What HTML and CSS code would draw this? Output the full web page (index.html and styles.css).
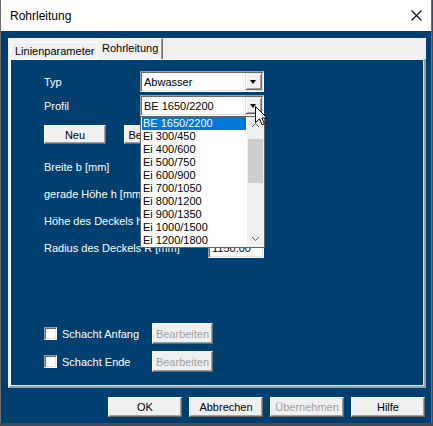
FILE: index.html
```html
<!DOCTYPE html>
<html lang="de">
<head>
<meta charset="utf-8">
<title>Rohrleitung</title>
<link rel="stylesheet" href="styles.css">
</head>
<body>
<div class="window">
  <div class="titlebar">
    <span class="title">Rohrleitung</span>
    <svg class="close" width="11" height="11" viewBox="0 0 11 11"><path d="M0.5 0.5L10.5 10.5M10.5 0.5L0.5 10.5" stroke="#000" stroke-width="1.1" fill="none"/></svg>
  </div>
  <div class="client">
    <div class="tabctl">
      <div class="tabstrip">
        <div class="tab">Linienparameter</div>
        <div class="tab active">Rohrleitung</div>
      </div>
      <div class="page">
        <div class="form-grid">
          <span class="label">Typ</span>
          <div class="combo"><span class="combo-text">Abwasser</span><span class="drop"><span class="tri"></span></span></div>
          <span class="label">Profil</span>
          <div class="combo open"><span class="combo-text">BE 1650/2200</span><span class="drop"><span class="tri"></span></span>
            <div class="listbox">
              <div class="items">
                <div class="item sel">BE 1650/2200</div>
                <div class="item">Ei 300/450</div>
                <div class="item">Ei 400/600</div>
                <div class="item">Ei 500/750</div>
                <div class="item">Ei 600/900</div>
                <div class="item">Ei 700/1050</div>
                <div class="item">Ei 800/1200</div>
                <div class="item">Ei 900/1350</div>
                <div class="item">Ei 1000/1500</div>
                <div class="item">Ei 1200/1800</div>
              </div>
              <div class="vscroll">
                <svg class="chev" width="17" height="17" viewBox="0 0 17 17"><path d="M5 10L8.5 6.5L12 10" stroke="#606060" stroke-width="1" fill="none"/></svg>
                <div class="thumb"></div>
                <svg class="chev down" width="17" height="17" viewBox="0 0 17 17"><path d="M5 7L8.5 10.5L12 7" stroke="#606060" stroke-width="1" fill="none"/></svg>
              </div>
            </div>
          </div>
        </div>
        <div class="btn-row">
          <div class="btn small">Neu</div>
          <div class="btn small">Bearbeiten</div>
        </div>
        <div class="fields">
          <span class="label">Breite b [mm]</span><div class="textbox">1650.00</div>
          <span class="label">gerade Höhe h [mm]</span><div class="textbox">2200.00</div>
          <span class="label">Höhe des Deckels h [mm]</span><div class="textbox">550.00</div>
          <span class="label">Radius des Deckels R [mm]</span><div class="textbox">1150.00</div>
        </div>
        <div class="checks">
          <span class="checkbox"></span><span class="label">Schacht Anfang</span><div class="btn small disabled">Bearbeiten</div>
          <span class="checkbox"></span><span class="label">Schacht Ende</span><div class="btn small disabled">Bearbeiten</div>
        </div>
      </div>
    </div>
    <div class="dlg-buttons">
      <div class="btn wide">OK</div>
      <div class="btn wide">Abbrechen</div>
      <div class="btn wide disabled">Übernehmen</div>
      <div class="btn wide">Hilfe</div>
    </div>
  </div>
  <svg class="cursor" width="13" height="21" viewBox="0 0 13 21"><path d="M0.5 0.5L0.5 16.5L4.5 12.8L7 18.8L9.3 17.8L6.9 12L12 12Z" fill="#fff" stroke="#000" stroke-width="1" stroke-linejoin="miter"/></svg>
</div>
</body>
</html>
```
FILE: styles.css
```css
* { box-sizing: border-box; }
html, body { margin: 0; padding: 0; }
body {
  width: 433px;
  height: 426px;
  overflow: hidden;
  background: #3c4b5d;
  font-family: "Liberation Sans", Arial, sans-serif;
  font-size: 11px;
  color: #000;
}
.window {
  position: relative;
  width: 432px;
  height: 423px;
  background: #004070;
  border-left: 1px solid #6d6d6d;
  border-right: 1px solid #6d6d6d;
  display: flex;
  flex-direction: column;
}
.titlebar {
  height: 31px;
  flex: none;
  background: #fff;
  display: flex;
  align-items: center;
  justify-content: space-between;
  padding: 1px 9px 0 9px;
  font-size: 12px;
}
.close { display: block; margin-top: -1px; }
.client {
  padding: 7px 5px 0 7px;
  display: flex;
  flex-direction: column;
}
.tabctl {
  width: 418px;
  height: 350px;
  display: flex;
  flex-direction: column;
}
.tabstrip {
  height: 21px;
  flex: none;
  background: #f0f0f0;
  display: flex;
  align-items: flex-end;
  padding-left: 2px;
}
.tab {
  height: 17px;
  width: 86px;
  padding-left: 4px;
  line-height: 16px;
  border-top: 1px solid #fff;
  border-left: 1px solid #fff;
  background: #f0f0f0;
  white-space: nowrap;
}
.tab.active {
  height: 21px;
  width: 67px;
  padding-left: 5px;
  line-height: 18px;
  border-right: 1px solid #696969;
  box-shadow: inset -1px 0 0 #a0a0a0;
}
.page {
  flex: 1;
  background: #004070;
  border-left: 2px solid #f0f0f0;
  border-right: 2px solid #a0a0a0;
  border-bottom: 2px solid #a0a0a0;
  box-shadow: inset 1px 1px 0 #fff, inset -1px -1px 0 #e3e3e3;
  padding: 12px 0 0 34px;
  display: flex;
  flex-direction: column;
  color: #fff;
}
.label { white-space: nowrap; color: #fff; }
.form-grid {
  display: grid;
  grid-template-columns: 96px 124px;
  grid-auto-rows: 21px;
  row-gap: 3px;
  align-items: center;
}
.combo {
  position: relative;
  height: 21px;
  background: #fff;
  border: 1px solid;
  border-color: #a0a0a0 #fff #fff #a0a0a0;
  box-shadow: inset 1px 1px 0 #696969, inset -1px -1px 0 #e3e3e3;
  display: flex;
  align-items: center;
  padding: 0 0 0 2px;
  color: #000;
}
.combo-text { flex: 1; padding-left: 1px; }
.drop {
  width: 17px;
  height: 17px;
  margin-right: 1px;
  background: #f0f0f0;
  border-top: 1px solid #e3e3e3;
  border-left: 1px solid #e3e3e3;
  border-right: 1px solid #696969;
  border-bottom: 1px solid #696969;
  box-shadow: inset 1px 1px 0 #fff, inset -1px -1px 0 #a0a0a0;
  display: flex;
  align-items: center;
  justify-content: center;
}
.tri {
  width: 0;
  height: 0;
  border-left: 3.5px solid transparent;
  border-right: 3.5px solid transparent;
  border-top: 4px solid #000;
  margin-left: -1px;
}
.listbox {
  position: absolute;
  z-index: 10;
  left: -1px;
  top: 20px;
  width: 125px;
  height: 132px;
  background: #fff;
  border: 1px solid #646464;
  display: flex;
}
.items { flex: 1; padding: 0 1px; }
.item {
  height: 13px;
  line-height: 13px;
  padding-left: 1px;
  color: #000;
  white-space: nowrap;
}
.item.sel { background: #0078d7; color: #fff; }
.vscroll {
  width: 17px;
  background: #f0f0f0;
  display: flex;
  flex-direction: column;
}
.chev { display: block; flex: none; }
.thumb {
  margin: 5px 1px 0 1px;
  height: 44px;
  background: #cdcdcd;
}
.chev.down { margin-top: auto; }
.btn {
  background: #f0f0f0;
  border-top: 1px solid #fff;
  border-left: 1px solid #fff;
  border-right: 1px solid #696969;
  border-bottom: 1px solid #696969;
  box-shadow: inset -1px -1px 0 #a0a0a0;
  display: flex;
  align-items: center;
  justify-content: center;
  color: #000;
  white-space: nowrap;
}
.btn.disabled { color: #a0a0a0; }
.btn-row {
  margin-top: 9px;
  display: flex;
  gap: 18px;
}
.btn.small { width: 62px; height: 19px; }
.checks .btn.small { width: 61px; height: 21px; }
.fields {
  margin-top: 13px;
  display: grid;
  grid-template-columns: 164px 56px;
  grid-auto-rows: 20px;
  row-gap: 7px;
  align-items: center;
}
.textbox {
  height: 20px;
  background: #fff;
  border: 1px solid;
  border-color: #a0a0a0 #fff #fff #a0a0a0;
  box-shadow: inset 1px 1px 0 #696969, inset -1px -1px 0 #e3e3e3;
  color: #000;
  padding-left: 3px;
  line-height: 18px;
}
.checks {
  margin-top: 65px;
  display: grid;
  grid-template-columns: 13px 95px 61px;
  column-gap: 0;
  grid-auto-rows: 21px;
  row-gap: 7px;
  align-items: center;
}
.checks .label { padding-left: 5px; }
.checkbox {
  width: 13px;
  height: 13px;
  background: #fff;
  border: 1px solid;
  border-color: #a0a0a0 #fff #fff #a0a0a0;
  box-shadow: inset 1px 1px 0 #696969, inset -1px -1px 0 #e3e3e3;
}
.dlg-buttons {
  margin-top: 9px;
  margin-right: 1px;
  display: flex;
  justify-content: flex-end;
  gap: 7px;
}
.btn.wide { width: 74px; height: 20px; }
.cursor {
  position: absolute;
  left: 254px;
  top: 106px;
  z-index: 20;
}
```
